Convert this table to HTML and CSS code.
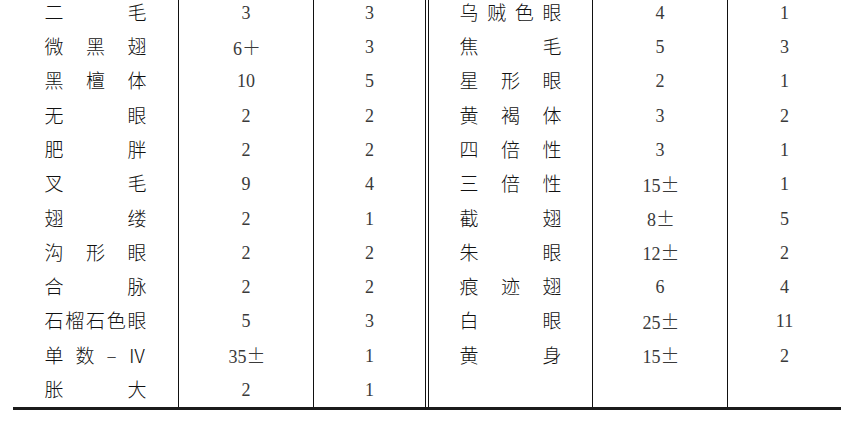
FILE: index.html
```html
<!DOCTYPE html>
<html lang="zh">
<head>
<meta charset="utf-8">
<link rel="stylesheet" href="styles.css">
</head>
<body>
<table class="tbl">
  <colgroup>
    <col class="c1"><col class="c2"><col class="c3"><col class="c4"><col class="c5"><col class="c6">
  </colgroup>
  <tr>
    <td class="name"><div class="sp"><span>二</span><span>毛</span></div></td>
    <td class="num b">3</td><td class="num b">3</td>
    <td class="name d"><div class="sp"><span>乌</span><span>贼</span><span>色</span><span>眼</span></div></td>
    <td class="num b">4</td><td class="num b">1</td>
  </tr>
  <tr>
    <td class="name"><div class="sp"><span>微</span><span>黑</span><span>翅</span></div></td>
    <td class="num b">6<span class="sym">＋</span></td><td class="num b">3</td>
    <td class="name d"><div class="sp"><span>焦</span><span>毛</span></div></td>
    <td class="num b">5</td><td class="num b">3</td>
  </tr>
  <tr>
    <td class="name"><div class="sp"><span>黑</span><span>檀</span><span>体</span></div></td>
    <td class="num b">10</td><td class="num b">5</td>
    <td class="name d"><div class="sp"><span>星</span><span>形</span><span>眼</span></div></td>
    <td class="num b">2</td><td class="num b">1</td>
  </tr>
  <tr>
    <td class="name"><div class="sp"><span>无</span><span>眼</span></div></td>
    <td class="num b">2</td><td class="num b">2</td>
    <td class="name d"><div class="sp"><span>黄</span><span>褐</span><span>体</span></div></td>
    <td class="num b">3</td><td class="num b">2</td>
  </tr>
  <tr>
    <td class="name"><div class="sp"><span>肥</span><span>胖</span></div></td>
    <td class="num b">2</td><td class="num b">2</td>
    <td class="name d"><div class="sp"><span>四</span><span>倍</span><span>性</span></div></td>
    <td class="num b">3</td><td class="num b">1</td>
  </tr>
  <tr>
    <td class="name"><div class="sp"><span>叉</span><span>毛</span></div></td>
    <td class="num b">9</td><td class="num b">4</td>
    <td class="name d"><div class="sp"><span>三</span><span>倍</span><span>性</span></div></td>
    <td class="num b">15<span class="sym">±</span></td><td class="num b">1</td>
  </tr>
  <tr>
    <td class="name"><div class="sp"><span>翅</span><span>缕</span></div></td>
    <td class="num b">2</td><td class="num b">1</td>
    <td class="name d"><div class="sp"><span>截</span><span>翅</span></div></td>
    <td class="num b">8<span class="sym">±</span></td><td class="num b">5</td>
  </tr>
  <tr>
    <td class="name"><div class="sp"><span>沟</span><span>形</span><span>眼</span></div></td>
    <td class="num b">2</td><td class="num b">2</td>
    <td class="name d"><div class="sp"><span>朱</span><span>眼</span></div></td>
    <td class="num b">12<span class="sym">±</span></td><td class="num b">2</td>
  </tr>
  <tr>
    <td class="name"><div class="sp"><span>合</span><span>脉</span></div></td>
    <td class="num b">2</td><td class="num b">2</td>
    <td class="name d"><div class="sp"><span>痕</span><span>迹</span><span>翅</span></div></td>
    <td class="num b">6</td><td class="num b">4</td>
  </tr>
  <tr>
    <td class="name"><div class="sp"><span>石</span><span>榴</span><span>石</span><span>色</span><span>眼</span></div></td>
    <td class="num b">5</td><td class="num b">3</td>
    <td class="name d"><div class="sp"><span>白</span><span>眼</span></div></td>
    <td class="num b">25<span class="sym">±</span></td><td class="num b">11</td>
  </tr>
  <tr>
    <td class="name"><div class="sp"><span>单</span><span>数</span><span class="dash">–</span><span>Ⅳ</span></div></td>
    <td class="num b">35<span class="sym">±</span></td><td class="num b">1</td>
    <td class="name d"><div class="sp"><span>黄</span><span>身</span></div></td>
    <td class="num b">15<span class="sym">±</span></td><td class="num b">2</td>
  </tr>
  <tr>
    <td class="name"><div class="sp"><span>胀</span><span>大</span></div></td>
    <td class="num b">2</td><td class="num b">1</td>
    <td class="name d"></td>
    <td class="num b"></td><td class="num b"></td>
  </tr>
</table>
</body>
</html>
```

FILE: styles.css
```css
html, body {
  margin: 0;
  padding: 0;
  background: #ffffff;
  overflow: hidden;
}
body {
  font-family: "Noto Sans CJK SC", sans-serif;
  color: #111111;
}
.tbl {
  border-collapse: separate;
  border-spacing: 0;
  table-layout: fixed;
  width: 828px;
  margin: -4.4px 0 0 13px;
  border-bottom: 3px solid #1b1b1b;
}
.c1 { width: 165px; }
.c2 { width: 135px; }
.c3 { width: 112px; }
.c4 { width: 167px; }
.c5 { width: 135px; }
.c6 { width: 114px; }
.tbl td {
  height: 34.3px;
  padding: 0;
  box-sizing: border-box;
  vertical-align: middle;
}
.tbl td.b { border-left: 1px solid #111111; }
.tbl td.d { border-left: 4px double #111111; }
.tbl td.name { padding-bottom: 3px; }
.name {
  font-size: 19px;
  font-weight: 300;
  line-height: 1;
}
.sp {
  display: flex;
  justify-content: space-between;
  align-items: center;
  width: 102px;
  margin: 0 auto;
}
.dash {
  display: inline-block;
  width: 9px;
  text-align: center;
}
.num {
  text-align: center;
  font-family: "Liberation Serif", "Noto Sans CJK SC", serif;
  font-size: 18px;
  color: #3a3a3a;
  line-height: 1;
}
.sym {
  display: inline-block;
  width: 17px;
  text-align: center;
  font-family: "Noto Sans CJK SC", sans-serif;
  font-weight: 300;
  font-size: 19px;
}
```
